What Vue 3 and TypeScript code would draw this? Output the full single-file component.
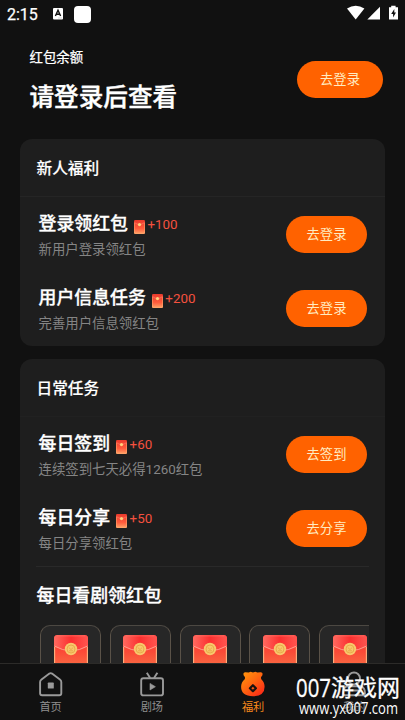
<script setup lang="ts">
interface Task {
  title: string
  reward: number
  desc: string
  action: string
}

interface Section {
  title: string
  tasks: Task[]
  faint?: boolean
}

const sections: Section[] = [
  {
    title: '新人福利',
    tasks: [
      { title: '登录领红包', reward: 100, desc: '新用户登录领红包', action: '去登录' },
      { title: '用户信息任务', reward: 200, desc: '完善用户信息领红包', action: '去登录' },
    ],
  },
  {
    title: '日常任务',
    faint: true,
    tasks: [
      { title: '每日签到', reward: 60, desc: '连续签到七天必得1260红包', action: '去签到' },
      { title: '每日分享', reward: 50, desc: '每日分享领红包', action: '去分享' },
    ],
  },
]

const episodes: number[] = [1, 2, 3, 4, 5]
</script>

<template>
  <div class="screen">
    <svg class="defs" width="0" height="0" aria-hidden="true">
      <defs>
        <linearGradient id="smallEnv" x1="0" y1="0" x2="0" y2="1">
          <stop offset="0" stop-color="#e93a2c" />
          <stop offset="0.6" stop-color="#ff5b3c" />
          <stop offset="1" stop-color="#ffa468" />
        </linearGradient>
        <linearGradient id="bigEnv" x1="0" y1="0" x2="0" y2="1">
          <stop offset="0" stop-color="#fb3a35" />
          <stop offset="0.4" stop-color="#fb4a37" />
          <stop offset="0.75" stop-color="#f96b43" />
          <stop offset="1" stop-color="#fb8a55" />
        </linearGradient>
        <linearGradient id="flap" x1="0" y1="0" x2="1" y2="0">
          <stop offset="0" stop-color="#ff6a60" />
          <stop offset="0.5" stop-color="#fb2f2f" />
          <stop offset="1" stop-color="#ff5550" />
        </linearGradient>
        <linearGradient id="bag" x1="0" y1="0" x2="0.9" y2="1">
          <stop offset="0" stop-color="#ff9a0c" />
          <stop offset="0.5" stop-color="#ff6510" />
          <stop offset="1" stop-color="#fb2418" />
        </linearGradient>
      </defs>
    </svg>

    <header class="status">
      <span class="clock">2:15</span>
      <svg class="ime" width="10" height="12" viewBox="0 0 10 12">
        <rect width="10" height="11.5" rx="1" fill="#fff" />
        <path d="M2.4 8 L5 2.3 L7.6 8 M3.4 6.3 H6.6" fill="none" stroke="#111" stroke-width="1.4" />
        <path d="M5.5 10h3" stroke="#888" stroke-width="0.7" stroke-dasharray="0.7 0.5" />
      </svg>
      <span class="blank-app"></span>
      <svg class="signals" width="52" height="16" viewBox="0 0 52 16">
        <path d="M0 3.6 Q8.7 -2.1 17.4 3.6 L8.7 14.6 Z" fill="#fff" />
        <path d="M20.3 14.6 L33 1.7 V14.6 Z" fill="#fff" />
        <path d="M42 2.2h2.2V.7h4.4v1.5H51v12.4h-9z" fill="#fff" />
        <path d="M47.3 3.9 L44.2 9h1.9v3.5L49 7.5h-1.7z" fill="#111" />
      </svg>
    </header>

    <section class="balance">
      <div>
        <p class="balance-label">红包余额</p>
        <h1 class="balance-value">请登录后查看</h1>
      </div>
      <button class="pill pill-wide">去登录</button>
    </section>

    <main class="content">
      <section v-for="section in sections" :key="section.title" class="card">
        <h2 class="card-title" :class="{ faint: section.faint }">{{ section.title }}</h2>
        <div v-for="task in section.tasks" :key="task.title" class="task">
          <div class="task-text">
            <div class="task-head">
              <span class="task-title">{{ task.title }}</span>
              <svg class="mini-env" width="11" height="14" viewBox="0 0 11 14">
                <rect width="11" height="14" rx="1.3" fill="url(#smallEnv)" />
                <path d="M.4 2.5 Q5.5 6.5 10.6 2.5" fill="none" stroke="#ff7968" stroke-width=".7" />
                <path d="M.5 3v10.2h10V3" fill="none" stroke="#ffae70" stroke-width=".7" opacity=".7" />
                <circle cx="5.5" cy="4.6" r="1.6" fill="#ffd27d" />
              </svg>
              <span class="reward">+{{ task.reward }}</span>
            </div>
            <p class="task-desc">{{ task.desc }}</p>
          </div>
          <button class="pill">{{ task.action }}</button>
        </div>
        <div v-if="section.faint" class="watch">
          <h3 class="watch-title">每日看剧领红包</h3>
          <div class="strip">
            <div v-for="n in episodes" :key="n" class="episode">
              <svg width="34" height="42" viewBox="0 0 34 42">
                <rect width="34" height="42" rx="3.5" fill="url(#bigEnv)" />
                <path d="M0 11 V3.5 Q0 0 3.5 0 H30.5 Q34 0 34 3.5 V11 Q17 20.5 0 11Z" fill="url(#flap)" />
                <path d="M.3 11 Q17 20.5 33.7 11" fill="none" stroke="#ff9d8c" stroke-width="1" />
                <path d="M3 .9 H31" stroke="#ff7a6c" stroke-width="1" opacity=".6" />
                <path d="M.6 12v30M33.4 12v30" stroke="#ffc08a" stroke-width="1.1" opacity=".85" />
                <circle cx="17" cy="14" r="6.2" fill="#f8c86c" />
                <circle cx="17" cy="14" r="4" fill="none" stroke="#e5a343" stroke-width=".8" />
                <path d="M14.8 12.5 L17 14.6 L19.2 12.5 M15 15.8 h4" fill="none" stroke="#e5a343" stroke-width=".8" />
              </svg>
            </div>
          </div>
        </div>
      </section>
    </main>

    <nav class="tabs">
      <div class="tab">
        <svg width="26" height="26" viewBox="0 0 26 26">
          <path d="M3.5 8.4 Q2.1 9.4 2.1 11 V22.2 Q2.1 24.2 4.1 24.2 H21.3 Q23.3 24.2 23.3 22.2 V11 Q23.3 9.4 21.9 8.4 L14 2.6 Q12.7 1.7 11.4 2.6Z" fill="none" stroke="#9a9a9a" stroke-width="1.9" />
          <rect x="9.8" y="11.6" width="6" height="6" rx=".7" fill="#9a9a9a" />
        </svg>
        <span>首页</span>
      </div>
      <div class="tab">
        <svg width="26" height="26" viewBox="0 0 26 26">
          <rect x="2.2" y="7.2" width="21.8" height="17.2" rx="2.2" fill="none" stroke="#9a9a9a" stroke-width="1.9" />
          <path d="M7.8 1.7 L11.2 7 M18.4 1.7 L15 7" stroke="#9a9a9a" stroke-width="1.9" />
          <path d="M11 12.4 L16.4 15.7 L11 19Z" fill="#9a9a9a" stroke="#9a9a9a" stroke-width=".6" />
        </svg>
        <span>剧场</span>
      </div>
      <div class="tab active">
        <svg width="26" height="26" viewBox="0 0 26 26">
          <path d="M3.4 2.8 Q3.6 1 5.5 1.2 L8.7 1.5 L10.6 .8 L13 1.5 L15.4 .8 L17.4 1.5 L20.5 1.2 Q22.4 1 22.6 2.8 Q22.7 4.4 21.3 5.8 Q20.6 7 21.5 8.6 Q24.6 11.5 24.6 15.8 Q24.6 25.2 13 25.2 Q1.1 25.2 1.1 15.8 Q1.1 11.5 4.5 8.6 Q5.4 7 4.7 5.8 Q3.3 4.4 3.4 2.8Z" fill="url(#bag)" />
          <path d="M12.9 14.2 L15.9 17.2 L12.9 20.2 L9.9 17.2Z" fill="#ff5a12" stroke="#1a1210" stroke-width="2.2" stroke-linejoin="round" />
        </svg>
        <span>福利</span>
      </div>
      <div class="tab">
        <svg width="26" height="26" viewBox="0 0 26 26">
          <circle cx="13" cy="7.5" r="6" fill="none" stroke="#9a9a9a" stroke-width="1.9" />
          <path d="M6 15.2 H20 Q24 17 24 22 Q24 24.3 21.7 24.3 H4.3 Q2 24.3 2 22 Q2 17 6 15.2Z M8 19.5 H18" fill="none" stroke="#9a9a9a" stroke-width="1.9" />
        </svg>
        <span>我的</span>
      </div>
    </nav>

    <svg class="watermark" width="115" height="50" viewBox="0 0 115 50">
      <g fill="#fff">
        <text class="mark-cn" x="6" y="26.5" textLength="35" lengthAdjust="spacingAndGlyphs">007</text>
        <text class="mark-cn mark-han" x="41" y="26" textLength="69" lengthAdjust="spacingAndGlyphs">游戏网</text>
        <text class="mark-url" x="9" y="43.5" textLength="99" lengthAdjust="spacingAndGlyphs">www.yx007.com</text>
      </g>
    </svg>
  </div>
</template>

<style>
body {
  background: #111;
  overflow: hidden;
}
</style>

<style scoped>
.screen {
  position: relative;
  display: flex;
  flex-direction: column;
  width: 405px;
  height: 720px;
  overflow: hidden;
  background: #111;
  color: #fff;
  font-family: Roboto, 'Noto Sans CJK SC', sans-serif;
}

.defs {
  position: absolute;
}

p,
h1,
h2,
h3 {
  margin: 0;
}

.status {
  display: flex;
  align-items: center;
  flex: none;
  height: 28px;
  padding: 0 7px;
}

.clock {
  width: 46px;
  font-size: 16px;
  font-weight: 400;
  -webkit-text-stroke: 0.25px #fff;
}

.ime {
  margin-right: 11px;
}

.blank-app {
  width: 17px;
  height: 17px;
  border-radius: 4px;
  background: #fff;
}

.signals {
  width: 52px;
  margin-top: -2px;
  margin-right: -1px;
  margin-left: auto;
}

.balance {
  display: flex;
  align-items: flex-start;
  justify-content: space-between;
  flex: none;
  height: 111px;
  padding: 20px 22px 0 29.5px;
  box-sizing: border-box;
}

.balance-label {
  font-size: 13.4px;
  line-height: 20px;
  font-weight: 400;
  -webkit-text-stroke: 0.25px #fff;
}

.balance-value {
  margin-top: 13px;
  font-size: 24.6px;
  line-height: 34px;
  font-weight: 500;
  -webkit-text-stroke: 0.4px #fff;
}

.pill {
  flex: none;
  width: 81px;
  height: 37px;
  padding: 0;
  border: 0;
  border-radius: 19px;
  background: #ff6200;
  color: #ffecc2;
  font: 13.3px/38px Roboto, 'Noto Sans CJK SC', sans-serif;
}

.pill-wide {
  width: 86px;
  margin-top: 13px;
}

.content {
  display: flex;
  flex: 1;
  flex-direction: column;
  gap: 13px;
  min-height: 0;
  padding: 0 20px;
  overflow: hidden;
}

.card {
  flex: none;
  border-radius: 12px;
  background: #1e1e1e;
}

.card-title {
  box-sizing: border-box;
  height: 58px;
  padding-left: 16.5px;
  border-bottom: 1px solid #252525;
  font-size: 15.7px;
  line-height: 60px;
  font-weight: 500;
  -webkit-text-stroke: 0.15px #fff;
}

.card-title.faint {
  border-color: #212121;
}

.task {
  display: flex;
  align-items: center;
  justify-content: space-between;
  height: 74.5px;
  padding: 0 18px 0 18.5px;
}

.task-text {
  padding-top: 2px;
}

.task-head {
  display: flex;
  align-items: center;
  height: 27px;
}

.task-title {
  font-size: 17.9px;
  line-height: 27px;
  font-weight: 500;
  -webkit-text-stroke: 0.3px #fff;
}

.mini-env {
  margin: 7px 2.5px 0 6px;
}

.reward {
  margin-top: 3px;
  color: #f4513f;
  font-size: 13.4px;
  line-height: 20px;
}

.task-desc {
  margin-top: 2px;
  color: #858585;
  font-size: 13.4px;
  line-height: 22px;
}

.watch {
  margin: 0 16px;
  border-top: 1px solid #292929;
}

.watch-title {
  height: 58px;
  padding-left: 0.5px;
  font-size: 17.9px;
  line-height: 58px;
  font-weight: 500;
  -webkit-text-stroke: 0.3px #fff;
}

.strip {
  display: flex;
  gap: 8.8px;
  padding-left: 4px;
  overflow: hidden;
}

.episode {
  display: flex;
  flex: none;
  justify-content: center;
  box-sizing: border-box;
  width: 61px;
  height: 78px;
  padding-top: 9px;
  border: 1px solid #5a5248;
  border-top-color: #4c4842;
  border-radius: 10px;
  background: #272727;
}

.tabs {
  display: grid;
  grid-template-columns: repeat(4, 1fr);
  flex: none;
  box-sizing: border-box;
  height: 57px;
  border-top: 1px solid #2c2b29;
  background: #111;
}

.tab {
  display: flex;
  flex-direction: column;
  align-items: center;
  gap: 2px;
  padding-top: 7px;
  color: #8f8f8f;
  font-size: 11.2px;
  line-height: 18px;
}

.tab.active {
  color: #f98a1c;
}

.watermark {
  position: absolute;
  right: 0;
  bottom: 0;
}

.mark-cn {
  font: 25px 'Open Sans', 'Noto Sans CJK SC', sans-serif;
  stroke: #fff;
  stroke-width: 0.3px;
}

.mark-han {
  font-size: 23px;
}

.mark-url {
  font: 15.5px 'Open Sans', 'Noto Sans', sans-serif;
}
</style>
